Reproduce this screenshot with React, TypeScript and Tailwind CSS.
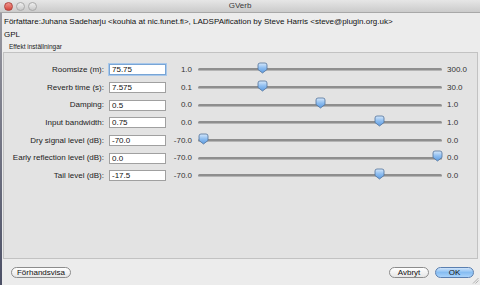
import React from "react";

type Param = { label: string; value: string; min: string; max: string; pos: number; focus?: boolean };

const params: Param[] = [
  { label: "Roomsize (m):", value: "75.75", min: "1.0", max: "300.0", pos: 0.25, focus: true },
  { label: "Reverb time (s):", value: "7.575", min: "0.1", max: "30.0", pos: 0.25 },
  { label: "Damping:", value: "0.5", min: "0.0", max: "1.0", pos: 0.5 },
  { label: "Input bandwidth:", value: "0.75", min: "0.0", max: "1.0", pos: 0.75 },
  { label: "Dry signal level (dB):", value: "-70.0", min: "-70.0", max: "0.0", pos: 0 },
  { label: "Early reflection level (dB):", value: "0.0", min: "-70.0", max: "0.0", pos: 1 },
  { label: "Tail level (dB):", value: "-17.5", min: "-70.0", max: "0.0", pos: 0.75 },
];

function Thumb() {
  return (
    <svg width="11" height="12" viewBox="0 0 11 12">
      <defs>
        <linearGradient id="thumbg" x1="0" y1="0" x2="0" y2="1">
          <stop offset="0" stopColor="#d6e8fb" />
          <stop offset="0.5" stopColor="#8dbdf0" />
          <stop offset="1" stopColor="#5d9be0" />
        </linearGradient>
      </defs>
      <path d="M1 3 Q1 1 3 1 H8 Q10 1 10 3 V7.5 L5.5 11 L1 7.5 Z" fill="url(#thumbg)" stroke="#52729a" strokeWidth="0.8" />
    </svg>
  );
}

function Row({ p }: { p: Param }) {
  return (
    <div className="flex items-center h-[17.7px]">
      <div className="w-[101px] text-right pr-[1px] text-[8px] text-[#1c1c1c]">{p.label}</div>
      <div
        className={
          "ml-[4px] w-[57px] h-[11px] bg-white text-[8px] leading-[10px] pl-[2px] text-[#111] " +
          (p.focus ? "border border-[#78a5d6] shadow-[0_0_0_1px_#a9c8ea]" : "border border-[#a0a0a0]")
        }
      >
        {p.value}
      </div>
      <div className="w-[26px] text-right text-[8px] text-[#333]">{p.min}</div>
      <div className="relative ml-[6px] w-[244px] h-[12px] flex items-center">
        <div className="w-full h-[3px] rounded-full bg-[#8e8e8e] border-b border-[#b5b5b5]" />
        <div className="absolute top-[-2px]" style={{ left: `${p.pos * 234}px` }}>
          <Thumb />
        </div>
      </div>
      <div className="ml-[5px] text-[8px] text-[#333]">{p.max}</div>
    </div>
  );
}

export default function App() {
  return (
    <div
      className="w-[480px] h-[285px] overflow-hidden bg-[#ececec] flex flex-col relative"
      style={{ fontFamily: '"Liberation Sans", Arial, sans-serif' }}
    >
      {/* Title bar */}
      <div className="h-[13px] shrink-0 bg-gradient-to-b from-[#e6e6e6] to-[#cbcbcb] border-b border-[#a8a8a8] flex items-center relative">
        <div className="flex items-center gap-[3px] pl-[4px]">
          <div className="w-[9px] h-[9px] rounded-full bg-gradient-to-b from-[#f0948d] to-[#d4423a] border border-[#b0453f]" />
          <div className="w-[9px] h-[9px] rounded-full bg-gradient-to-b from-[#efefef] to-[#c8c8c8] border border-[#a9a9a9]" />
          <div className="w-[9px] h-[9px] rounded-full bg-gradient-to-b from-[#efefef] to-[#c8c8c8] border border-[#a9a9a9]" />
        </div>
        <div className="absolute inset-0 flex items-center justify-center text-[8px] text-[#3a3a3a]">GVerb</div>
      </div>

      <div className="flex flex-1 min-h-0">
        {/* desktop edge */}
        <div className="w-[2px] bg-gradient-to-b from-[#9a9aa2] to-[#4c5066]" />
        <div className="flex-1 flex flex-col min-w-0">
          <div className="pl-[2px] pt-[3px] h-[13px] text-[8px] text-[#111] whitespace-nowrap">
            Författare:Juhana Sadeharju &lt;kouhia at nic.funet.fi&gt;, LADSPAification by Steve Harris &lt;steve@plugin.org.uk&gt;
          </div>
          <div className="pl-[2px] pt-[3px] h-[13px] text-[8px] text-[#111]">GPL</div>
          <div className="pl-[7px] pt-[3px] h-[13px] text-[6.5px] text-[#222]">Effekt inställningar</div>

          {/* Panel */}
          <div className="ml-[1px] mr-[2px] h-[207px] bg-[#e3e3e3] border border-[#c2c2c2] pt-[8px]">
            {params.map((p) => (
              <Row key={p.label} p={p} />
            ))}
          </div>

          {/* Buttons */}
          <div className="flex items-center flex-1 pl-[9px] pr-[6px]">
            <button className="h-[11px] w-[60px] rounded-full border border-[#8c8c8c] bg-gradient-to-b from-[#ffffff] to-[#e6e6e6] text-[8px] leading-[9px] text-[#111]">
              Förhandsvisa
            </button>
            <div className="flex-1" />
            <button className="h-[11px] w-[40px] rounded-full border border-[#8c8c8c] bg-gradient-to-b from-[#ffffff] to-[#e6e6e6] text-[8px] leading-[9px] text-[#111]">
              Avbryt
            </button>
            <button className="ml-[6px] h-[11px] w-[39px] rounded-full border border-[#5a7fb0] bg-gradient-to-b from-[#cfe4fa] via-[#87bdf2] to-[#a9d3fb] text-[8px] leading-[9px] text-[#111]">
              OK
            </button>
          </div>
        </div>
      </div>
      {/* resize grip */}
      <svg className="absolute right-[1px] bottom-[1px]" width="7" height="7" viewBox="0 0 7 7">
        <path d="M6.5 1 L1 6.5 M6.5 3.5 L3.5 6.5" stroke="#9a9a9a" strokeWidth="0.7" />
      </svg>
    </div>
  );
}
